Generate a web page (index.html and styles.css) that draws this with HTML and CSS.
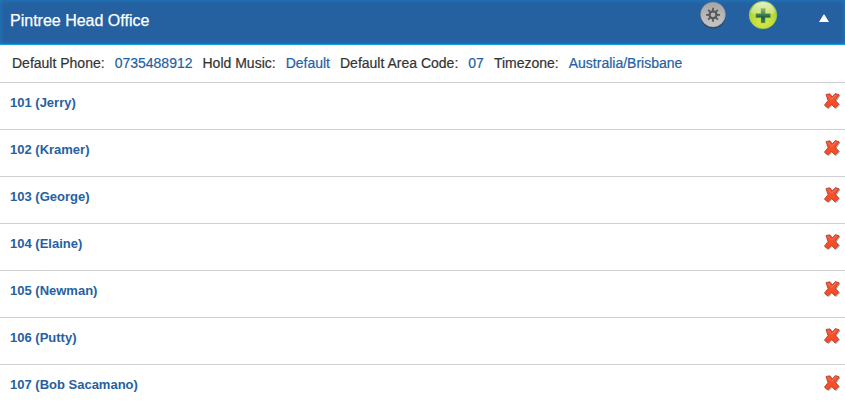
FILE: index.html
```html
<!DOCTYPE html>
<html lang="en">
<head>
<meta charset="utf-8">
<title>Pintree Head Office</title>
<link rel="stylesheet" href="styles.css">
</head>
<body>
<svg class="defs" aria-hidden="true">
  <defs>
    <linearGradient id="silver" x1="0" y1="0" x2="0" y2="1"><stop offset="0" stop-color="#a6a6a6"/><stop offset="1" stop-color="#c6c6c6"/></linearGradient>
    <radialGradient id="lime" cx=".5" cy=".72" r=".65"><stop offset="0" stop-color="#dcec4a"/><stop offset=".6" stop-color="#bcdc3a"/><stop offset="1" stop-color="#9ccb32"/></radialGradient>
    <linearGradient id="shine" x1="0" y1="0" x2="0" y2="1"><stop offset="0" stop-color="#fff" stop-opacity=".75"/><stop offset="1" stop-color="#fff" stop-opacity=".2"/></linearGradient>
    <linearGradient id="plus" x1="0" y1="0" x2="0" y2="1"><stop offset="0" stop-color="#8ab883"/><stop offset=".45" stop-color="#3c7a50"/><stop offset=".6" stop-color="#1f6038"/><stop offset="1" stop-color="#3f8434"/></linearGradient>
    <linearGradient id="red" x1="0" y1="0" x2="0" y2="1"><stop offset="0" stop-color="#f4573c"/><stop offset="1" stop-color="#fa4a1c"/></linearGradient>
    <symbol id="cross" viewBox="0 0 18 18">
      <path d="M3 2.500 6.800 1.800 9.100 5.100 12.300 1.500 16 2.800 12.200 8.300 15.600 12.200 12 15.800 8.300 12.300 4.800 15.800 1.400 13.200 5 8.600Z" fill="#555" opacity=".5" stroke="#555" stroke-linejoin="round" transform="translate(.9 .8)"/>
      <path d="M3 2.500 6.800 1.800 9.100 5.100 12.300 1.500 16 2.800 12.200 8.300 15.600 12.200 12 15.800 8.300 12.300 4.800 15.800 1.400 13.200 5 8.600Z" fill="url(#red)" stroke="#b83a25" stroke-width=".8" stroke-linejoin="round"/>
      <path d="M4.800 3.500 8.800 7.300 12.700 3" fill="none" stroke="#ff9478" stroke-width="1" opacity=".45"/>
    </symbol>
  </defs>
</svg>
<header class="bar">
  <h1 class="title">Pintree Head Office</h1>
  <svg class="gear" width="30" height="30" viewBox="0 0 30 30">
    <circle cx="15" cy="15.800" r="12.700" fill="#2a3b52" opacity=".8"/>
    <circle cx="15" cy="14.600" r="12.400" fill="url(#silver)" stroke="#969696" stroke-width=".6"/>
    <g stroke="#575757" stroke-width="1.700">
      <path d="M15 7.800v14M8 14.800h14M10.100 9.900l9.800 9.800M19.900 9.900l-9.800 9.800"/>
    </g>
    <circle cx="15" cy="14.800" r="3.500" fill="#b5b5b5" stroke="#575757" stroke-width="2.200"/>
  </svg>
  <svg class="add" width="30" height="30" viewBox="0 0 30 30">
    <circle cx="15" cy="15" r="13.800" fill="url(#lime)" stroke="#a3cf4a" stroke-width=".6"/>
    <path d="M3 13C3.500 6 9 2.100 15 2.100S26.500 6 27 13C20 16 10 16 3 13Z" fill="url(#shine)"/>
    <path d="M13 8.500h4.200v5h5.300v4.200h-5.300V23H13v-5.300H7.800v-4.200H13Z" fill="url(#plus)" stroke="#8fba6b" stroke-width=".5"/>
  </svg>
  <svg class="collapse" width="10" height="8" viewBox="0 0 10 8"><path d="M5 0 10 8H0Z" fill="#fff"/></svg>
</header>
<div class="meta">
  <span>Default Phone:</span><a>0735488912</a>
  <span>Hold Music:</span><a>Default</a>
  <span>Default Area Code:</span><a>07</a>
  <span>Timezone:</span><a>Australia/Brisbane</a>
</div>
<ul class="list">
  <li><a>101 (Jerry)</a><svg class="cross"><use href="#cross"/></svg></li>
  <li><a>102 (Kramer)</a><svg class="cross"><use href="#cross"/></svg></li>
  <li><a>103 (George)</a><svg class="cross"><use href="#cross"/></svg></li>
  <li><a>104 (Elaine)</a><svg class="cross"><use href="#cross"/></svg></li>
  <li><a>105 (Newman)</a><svg class="cross"><use href="#cross"/></svg></li>
  <li><a>106 (Putty)</a><svg class="cross"><use href="#cross"/></svg></li>
  <li><a>107 (Bob Sacamano)</a><svg class="cross"><use href="#cross"/></svg></li>
</ul>
</body>
</html>
```
FILE: styles.css
```css
* { box-sizing: border-box; }
html { height: 100%; overflow: hidden; }
body {
  height: 100%;
  margin: 0;
  overflow: hidden;
  background: #fff;
  font-family: "Liberation Sans", Arial, sans-serif;
}
.defs { display: block; width: 0; height: 0; }
.bar {
  display: flex;
  align-items: flex-start;
  height: 45px;
  padding: 0 16px 0 10px;
  background: #2561a1;
  border-bottom: 1px solid #1a9be0;
  box-shadow: inset 0 0 5px #1c7fc2;
}
.title {
  flex: 1;
  margin: 0;
  color: #fff;
  font-size: 16px;
  font-weight: 400;
  line-height: 42px;
  -webkit-text-stroke: .25px #fff;
}
.gear { margin-right: 20px; }
.add { margin-right: 41px; }
.collapse { margin-top: 14px; }
.meta {
  display: flex;
  gap: 10px;
  height: 37px;
  padding-left: 12px;
  color: #333;
  font-size: 14px;
  line-height: 36px;
  white-space: nowrap;
  -webkit-text-stroke: .2px currentColor;
}
.meta a, .list a { color: #2561a1; }
.list { margin: 0; padding: 0; list-style: none; }
.list li {
  display: flex;
  justify-content: space-between;
  height: 47px;
  padding: 9px 4px 0 10px;
  border-top: 1px solid #d0d0d0;
  font-size: 13px;
  font-weight: 700;
  line-height: 21px;
}
.cross { width: 18px; height: 18px; }
```
